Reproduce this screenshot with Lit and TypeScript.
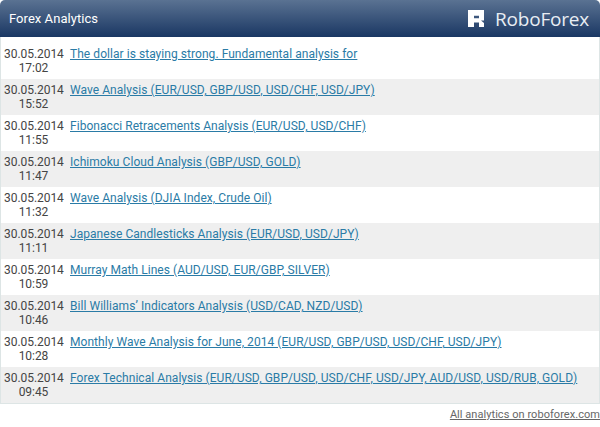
import { LitElement, html, css } from 'lit'
import { customElement } from 'lit/decorators.js'

const rows = [
  ['17:02', 'The dollar is staying strong. Fundamental analysis for'],
  ['15:52', 'Wave Analysis (EUR/USD, GBP/USD, USD/CHF, USD/JPY)'],
  ['11:55', 'Fibonacci Retracements Analysis (EUR/USD, USD/CHF)'],
  ['11:47', 'Ichimoku Cloud Analysis (GBP/USD, GOLD)'],
  ['11:32', 'Wave Analysis (DJIA Index, Crude Oil)'],
  ['11:11', 'Japanese Candlesticks Analysis (EUR/USD, USD/JPY)'],
  ['10:59', 'Murray Math Lines (AUD/USD, EUR/GBP, SILVER)'],
  ['10:46', 'Bill Williams’ Indicators Analysis (USD/CAD, NZD/USD)'],
  ['10:28', 'Monthly Wave Analysis for June, 2014 (EUR/USD, GBP/USD, USD/CHF, USD/JPY)'],
  ['09:45', 'Forex Technical Analysis (EUR/USD, GBP/USD, USD/CHF, USD/JPY, AUD/USD, USD/RUB, GOLD)'],
]

@customElement('app-root')
export class AppRoot extends LitElement {
  static styles = css`
    :host {
      display: block;
      width: 600px;
      height: 427px;
      overflow: hidden;
      background: #fff;
      font-family: Roboto, sans-serif;
      font-size: 12px;
      letter-spacing: 0.05px;
      color: #444;
    }

    .header {
      display: flex;
      align-items: center;
      justify-content: space-between;
      height: 37px;
      padding: 0 11px 0 9px;
      border-radius: 5px 5px 0 0;
      background: linear-gradient(#5a7292, #1a3763);
      color: #fff;
    }
    .title {
      font-size: 13px;
    }
    .logo {
      display: flex;
      align-items: center;
      gap: 11px;
      font-family: 'Open Sans', sans-serif;
      font-size: 19px;
      letter-spacing: -0.2px;
      color: #e8edf3;
    }
    .logo svg {
      display: block;
    }

    .list {
      padding-top: 6px;
      border: solid 1px #dde5e5;
      border-width: 0 1px 1px;
    }
    .row {
      display: flex;
      gap: 7px;
      box-sizing: border-box;
      height: 36px;
      padding: 4px 0 0 3px;
    }
    .row:nth-child(even) {
      background: #efefef;
    }
    .stamp {
      flex: none;
      width: 59px;
      line-height: 14px;
      text-align: center;
      letter-spacing: -0.05px;
    }
    .stamp span {
      display: block;
    }
    .link {
      line-height: 14px;
      height: 14px;
      color: #2a7ba6;
      text-decoration: underline;
    }

    .footer {
      padding-top: 4px;
      line-height: 14px;
      font-size: 11px;
      text-align: right;
    }
    .footer a {
      color: #666;
      text-decoration: underline;
    }
  `

  render() {
    return html`
      <div class="header">
        <span class="title">Forex Analytics</span>
        <span class="logo">
          <svg width="16" height="17" viewBox="0 0 16 17" fill="#fff" fill-rule="evenodd">
            <path d="M0 0H16V10.5H13L16 13V17H11V12.5H6V17H0ZM6 5.7V8.3H11V5.7Z" />
          </svg>
          RoboForex
        </span>
      </div>
      <div class="list">
        ${rows.map(([time, title]) => html`
          <div class="row">
            <div class="stamp">
              <span>30.05.2014</span>
              <span>${time}</span>
            </div>
            <a class="link">${title}</a>
          </div>
        `)}
      </div>
      <div class="footer"><a>All analytics on roboforex.com</a></div>
    `
  }
}

declare global {
  interface HTMLElementTagNameMap {
    'app-root': AppRoot,
  }
}
